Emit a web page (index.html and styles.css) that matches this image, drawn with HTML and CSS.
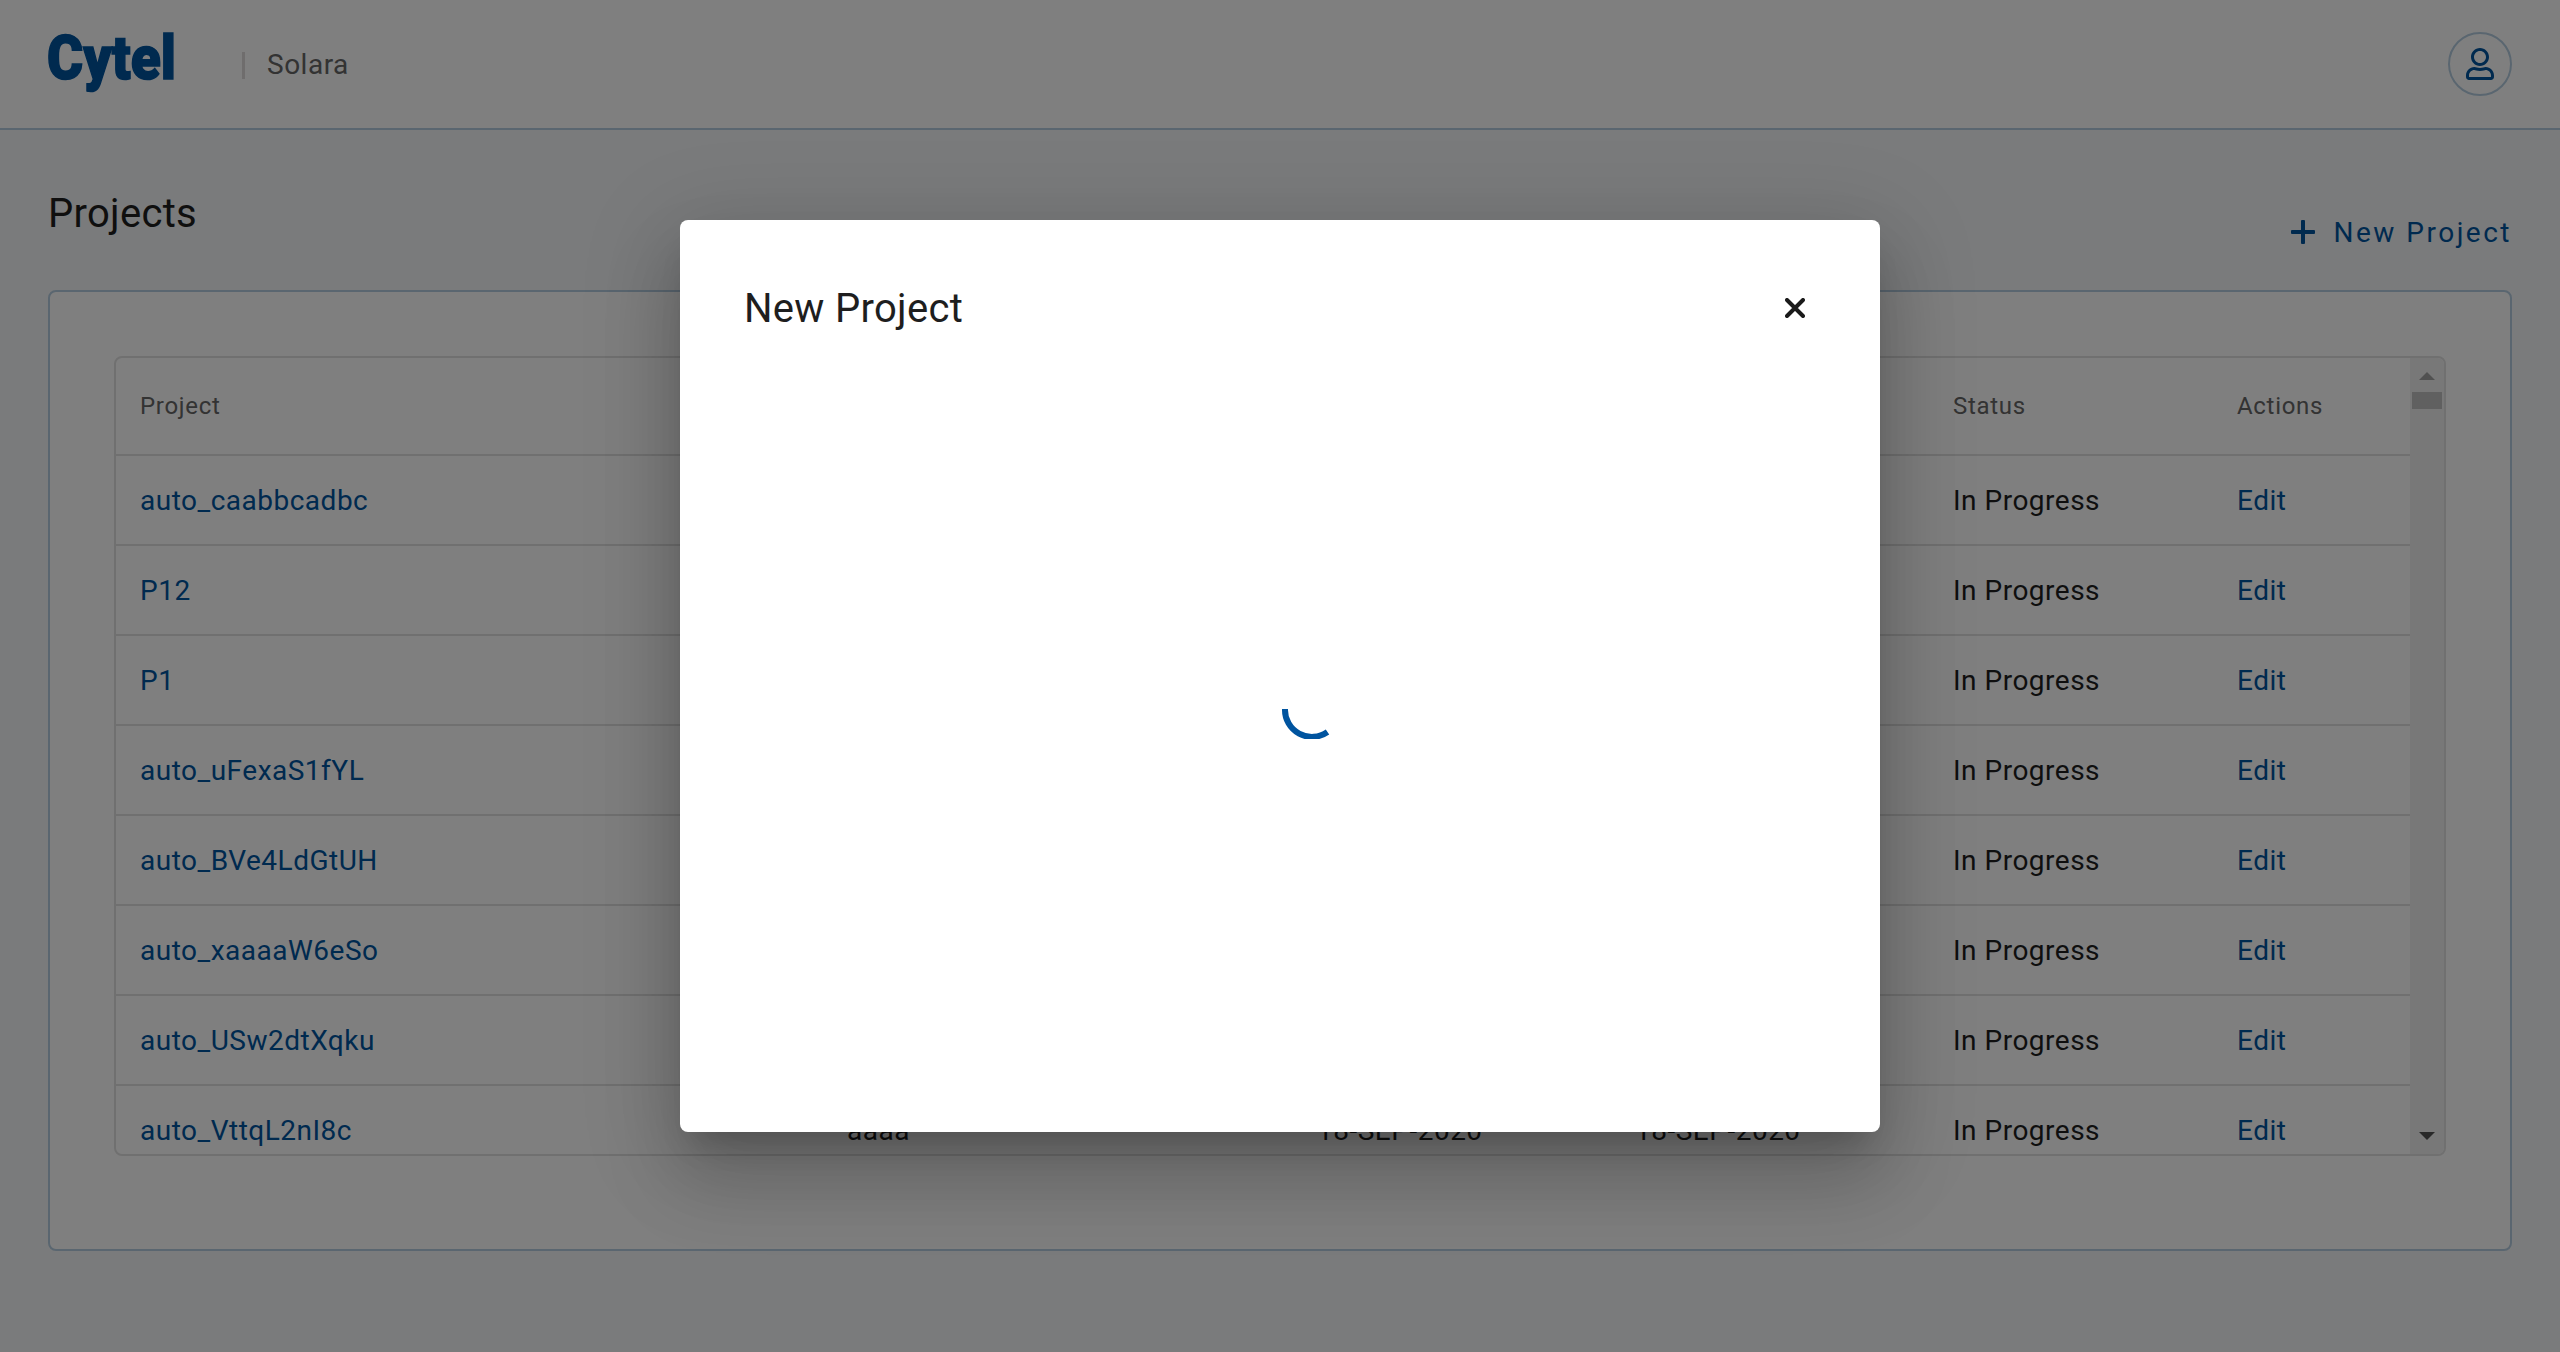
FILE: index.html
```html
<!DOCTYPE html>
<html lang="en">
<head>
<meta charset="utf-8">
<title>Solara</title>
<link rel="stylesheet" href="styles.css">
</head>
<body>
<header class="topbar">
  <svg class="logo" width="130" height="64" viewBox="0 0 130 64" role="img" aria-label="Cytel">
    <text x="-1" y="46.500" textLength="129" lengthAdjust="spacingAndGlyphs">Cytel</text>
  </svg>
  <span class="divider"></span>
  <span class="product">Solara</span>
  <button class="avatar" aria-label="Account">
    <svg width="28" height="32" viewBox="0 0 448 512"><path d="M313.6 304c-28.7 0-42.5 16-89.6 16-47.1 0-60.8-16-89.6-16C60.2 304 0 364.2 0 438.4V464c0 26.5 21.500 48 48 48h352c26.500 0 48-21.500 48-48v-25.600c0-74.200-60.200-134.400-134.400-134.400zM400 464H48v-25.600c0-47.600 38.800-86.400 86.400-86.400 14.600 0 38.300 16 89.600 16 51.700 0 74.900-16 89.600-16 47.600 0 86.400 38.800 86.400 86.400V464zM224 288c79.500 0 144-64.500 144-144S303.500 0 224 0 80 64.500 80 144s64.500 144 144 144zm0-240c52.900 0 96 43.100 96 96s-43.100 96-96 96-96-43.100-96-96 43.100-96 96-96z"/></svg>
  </button>
</header>
<main class="page">
  <div class="page-head">
    <h1 class="title">Projects</h1>
    <button class="new-project">
      <svg width="24" height="24" viewBox="0 0 24 24"><rect x="10" y="0" width="4" height="24" rx="1"/><rect x="0" y="10" width="24" height="4" rx="1"/></svg>
      <span>New Project</span>
    </button>
  </div>
  <section class="card">
    <div class="table-box">
      <div class="table">
        <div class="row head"><span>Project</span><span></span><span></span><span></span><span>Status</span><span>Actions</span></div>
        <div class="row"><a>auto_caabbcadbc</a><span></span><span></span><span></span><span>In Progress</span><a>Edit</a></div>
        <div class="row"><a>P12</a><span></span><span></span><span></span><span>In Progress</span><a>Edit</a></div>
        <div class="row"><a>P1</a><span></span><span></span><span></span><span>In Progress</span><a>Edit</a></div>
        <div class="row"><a>auto_uFexaS1fYL</a><span></span><span></span><span></span><span>In Progress</span><a>Edit</a></div>
        <div class="row"><a>auto_BVe4LdGtUH</a><span></span><span></span><span></span><span>In Progress</span><a>Edit</a></div>
        <div class="row"><a>auto_xaaaaW6eSo</a><span></span><span></span><span></span><span>In Progress</span><a>Edit</a></div>
        <div class="row"><a>auto_USw2dtXqku</a><span></span><span></span><span></span><span>In Progress</span><a>Edit</a></div>
        <div class="row"><a>auto_VttqL2nI8c</a><span>aaaa</span><span>18-SEP-2020</span><span>18-SEP-2020</span><span>In Progress</span><a>Edit</a></div>
      </div>
      <div class="scrollbar">
        <span class="arrow up"></span>
        <span class="thumb"></span>
        <span class="arrow down"></span>
      </div>
    </div>
  </section>
</main>
<div class="backdrop">
  <div class="dialog" role="dialog" aria-label="New Project">
    <div class="dialog-head">
      <h2 class="title">New Project</h2>
      <button class="close" aria-label="Close">
        <svg width="20" height="20" viewBox="0 0 20 20"><path d="M2 2L18 18M18 2L2 18"/></svg>
      </button>
    </div>
    <div class="dialog-body">
      <svg class="spinner" width="60" height="60" viewBox="0 0 60 60"><path d="M4 30A27 27 0 0 0 46.500 53"/></svg>
    </div>
  </div>
</div>
</body>
</html>
```

FILE: styles.css
```css
:root {
  --blue: #00549f;
  --outline: #b4cde0;
  --line: #e0e0e0;
  --text: #1e1e1e;
  --muted: #666;
}
* { box-sizing: border-box; }
body {
  margin: 0;
  height: 1352px;
  overflow: hidden;
  background: #f4f6f8;
  color: var(--text);
  font: 400 28px/40px Roboto, "Liberation Sans", sans-serif;
  letter-spacing: 0.5px;
}
button {
  margin: 0;
  padding: 0;
  border: 0;
  background: none;
  font: inherit;
  letter-spacing: inherit;
}
svg { display: block; }
.topbar {
  display: flex;
  align-items: center;
  height: 130px;
  padding: 0 48px;
  background: #fff;
  border-bottom: 2px solid var(--outline);
}
.logo { fill: var(--blue); stroke: var(--blue); stroke-width: 1.5; overflow: visible; }
.logo text { font: 900 61px Roboto, sans-serif; letter-spacing: 0; }
.divider { width: 3px; height: 27px; margin: 3px 22px 0 64px; background: #dedada; }
.product { padding-top: 2px; color: var(--muted); }
.avatar {
  display: grid;
  place-items: center;
  width: 64px;
  height: 64px;
  margin-left: auto;
  border: 2px solid var(--outline);
  border-radius: 50%;
  fill: var(--blue);
}
.page { padding: 56px 48px 0; }
.page-head { display: flex; justify-content: space-between; height: 104px; }
.title { margin: 0; padding-top: 2px; font-size: 40px; line-height: 52px; font-weight: 400; letter-spacing: 0.3px; }
.new-project {
  display: flex;
  align-items: center;
  gap: 18px;
  height: 40px;
  margin-top: 26px;
  color: var(--blue);
  fill: var(--blue);
  letter-spacing: 2.5px;
}
.new-project span { padding-top: 2px; }
.card {
  height: 961px;
  padding: 64px;
  background: #fff;
  border: 2px solid var(--outline);
  border-radius: 8px;
}
.table-box {
  display: flex;
  height: 800px;
  border: 2px solid var(--line);
  border-radius: 8px;
  overflow: hidden;
}
.table { flex: 1; }
.row {
  display: grid;
  grid-template-columns: 707px 470px 318px 318px 284px 1fr;
  align-items: center;
  height: 90px;
  border-bottom: 2px solid var(--line);
}
.row > * { padding: 2px 0 0 24px; }
.row a { color: var(--blue); }
.head { height: 98px; color: var(--muted); font-size: 24px; letter-spacing: 0.7px; }
.head > * { padding-top: 0; }
.scrollbar {
  display: flex;
  flex-direction: column;
  align-items: center;
  width: 34px;
  padding: 14px 0;
  background: #f1f1f1;
}
.arrow { border: 8px solid transparent; }
.up { border-top: 0; border-bottom-color: #a3a3a3; }
.down { border-bottom: 0; border-top-color: #505050; margin-top: auto; }
.thumb { width: 30px; height: 17px; margin-top: 12px; background: #c1c1c1; }
.backdrop {
  position: absolute;
  inset: 0;
  display: grid;
  place-items: center;
  background: rgba(0, 0, 0, 0.5);
}
.dialog {
  display: flex;
  flex-direction: column;
  width: 1200px;
  height: 912px;
  padding: 61px 64px;
  background: #fff;
  border-radius: 8px;
  box-shadow: 0 22px 30px -14px rgba(0, 0, 0, 0.2), 0 48px 76px 6px rgba(0, 0, 0, 0.14), 0 18px 92px 16px rgba(0, 0, 0, 0.12);
}
.dialog-head { display: flex; justify-content: space-between; align-items: center; padding-right: 11px; }
.close svg { stroke: #1a1a1a; stroke-width: 4; stroke-linecap: round; }
.dialog-body { padding: 344px 0 0 537px; }
.spinner { fill: none; stroke: var(--blue); stroke-width: 6; }
```
